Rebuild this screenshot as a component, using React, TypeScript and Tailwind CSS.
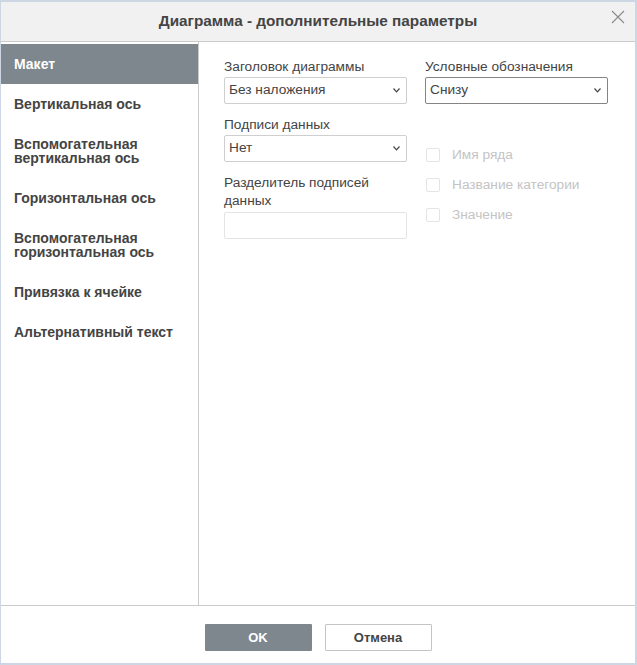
import React from 'react';

const sections = [
  'Макет',
  'Вертикальная ось',
  'Вспомогательная вертикальная ось',
  'Горизонтальная ось',
  'Вспомогательная горизонтальная ось',
  'Привязка к ячейке',
  'Альтернативный текст',
];

const Chevron = () => (
  <svg width="7" height="5" viewBox="0 0 7 5" className="shrink-0">
    <path d="M0.5 0.5 L3.5 3.8 L6.5 0.5" fill="none" stroke="#444" strokeWidth="1.2" />
  </svg>
);

const Select: React.FC<{ value: string; focused?: boolean }> = ({ value, focused }) => (
  <div
    className={
      'h-[27px] flex items-center justify-between pl-[4px] pr-[6px] rounded-[2px] bg-white border ' +
      (focused ? 'border-[#848484]' : 'border-[#cfcfcf]')
    }
  >
    <span className="text-[13.7px] text-[#444]">{value}</span>
    <Chevron />
  </div>
);

const Checkbox: React.FC<{ label: string }> = ({ label }) => (
  <div className="h-[30px] flex items-center gap-[12px]">
    <div className="ml-px w-[14px] h-[14px] rounded-[2px] border border-[#e4e4e4] bg-white" />
    <span className="text-[13.7px] text-[#c4c4c4]">{label}</span>
  </div>
);

export default function App() {
  const active = 0;
  return (
    <div className="w-[637px] h-[665px] flex flex-col bg-white border-t-2 border-r-2 border-b-2 border-l border-[#cdd7e4] font-['Liberation_Sans',Arial,sans-serif] text-[#444]">
      {/* header */}
      <div className="relative h-[40px] shrink-0 bg-[#f1f1f1] border-b border-[#cbcbcb] flex items-center justify-center">
        <span className="text-[15.3px] font-bold">Диаграмма - дополнительные параметры</span>
        <button className="absolute right-[10px] top-[7px] w-[15px] h-[15px] flex items-center justify-center">
          <svg width="14" height="14" viewBox="0 0 14 14">
            <path d="M1 1 L13 13 M13 1 L1 13" stroke="#8a8a8a" strokeWidth="1.1" fill="none" />
          </svg>
        </button>
      </div>

      {/* body */}
      <div className="flex-1 flex min-h-0">
        <div className="w-[198px] shrink-0 border-r border-[#cbcbcb] pt-[2px]">
          {sections.map((s, i) => (
            <div
              key={s}
              className={
                'pl-[13px] pr-[10px] py-[13px] text-[14px] leading-[14px] font-bold ' +
                (i === active ? 'bg-[#7e868e] text-white' : 'text-[#444]')
              }
            >
              {s}
            </div>
          ))}
        </div>

        <div className="flex-1 pl-[25px] pt-[16px]">
          <div className="grid grid-cols-[183px_183px] gap-x-[18px]">
            <div className="flex flex-col">
              <label className="text-[13.7px] leading-[18px] mb-px">Заголовок диаграммы</label>
              <Select value="Без наложения" />
              <label className="text-[13.7px] leading-[18px] mt-[12px] mb-px">Подписи данных</label>
              <Select value="Нет" />
              <label className="text-[13.7px] leading-[18px] mt-[12px] mb-[2px]">
                Разделитель подписей
                <br />
                данных
              </label>
              <div className="h-[27px] rounded-[2px] border border-[#e4e4e4] bg-white" />
            </div>
            <div className="flex flex-col">
              <label className="text-[13.7px] leading-[18px] mb-px">Условные обозначения</label>
              <Select value="Снизу" focused />
              <div className="mt-[36px] flex flex-col">
                <Checkbox label="Имя ряда" />
                <Checkbox label="Название категории" />
                <Checkbox label="Значение" />
              </div>
            </div>
          </div>
        </div>
      </div>

      {/* footer */}
      <div className="h-[58px] shrink-0 border-t border-[#cbcbcb] flex justify-center gap-[13px] pt-[18px]">
        <button className="w-[107px] h-[27px] rounded-[1px] bg-[#7e868e] text-white text-[13px] font-bold">
          OK
        </button>
        <button className="w-[107px] h-[27px] rounded-[1px] bg-white border border-[#c4c4c4] text-[#444] text-[13px] font-bold">
          Отмена
        </button>
      </div>
    </div>
  );
}
